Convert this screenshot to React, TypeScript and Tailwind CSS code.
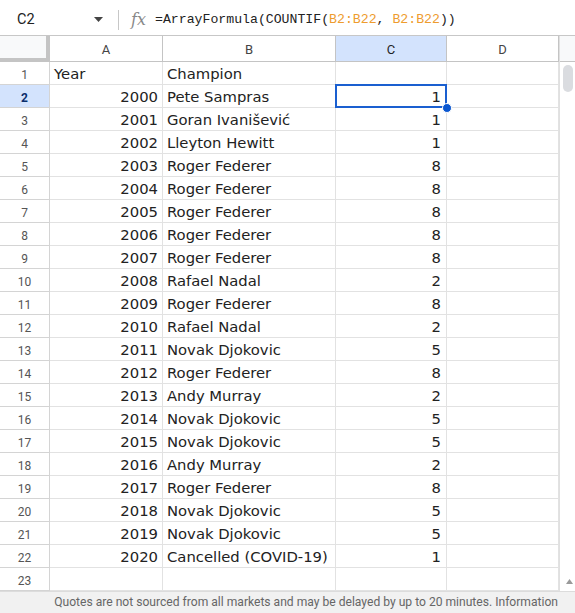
import React from "react";

const data: [number, string, number][] = [
  [2000, "Pete Sampras", 1],
  [2001, "Goran Ivanišević", 1],
  [2002, "Lleyton Hewitt", 1],
  [2003, "Roger Federer", 8],
  [2004, "Roger Federer", 8],
  [2005, "Roger Federer", 8],
  [2006, "Roger Federer", 8],
  [2007, "Roger Federer", 8],
  [2008, "Rafael Nadal", 2],
  [2009, "Roger Federer", 8],
  [2010, "Rafael Nadal", 2],
  [2011, "Novak Djokovic", 5],
  [2012, "Roger Federer", 8],
  [2013, "Andy Murray", 2],
  [2014, "Novak Djokovic", 5],
  [2015, "Novak Djokovic", 5],
  [2016, "Andy Murray", 2],
  [2017, "Roger Federer", 8],
  [2018, "Novak Djokovic", 5],
  [2019, "Novak Djokovic", 5],
  [2020, "Cancelled (COVID-19)", 1],
];

const cellFont = "font-['DejaVu_Sans',sans-serif] text-[14.8px] text-[#222] pt-[3px]";

function RowHeader({ n, selected }: { n: number; selected?: boolean }) {
  return (
    <div
      className={`h-[23px] border-r border-b border-[#d4d4d4] flex items-center justify-center pt-[3px] font-['Roboto',sans-serif] text-[12px] ${
        selected ? "bg-[#d3e3fd] text-[#0b2e6b] font-bold" : "bg-white text-[#555]"
      }`}
    >
      {n}
    </div>
  );
}

export default function App() {
  const rows: ([number, string, number] | null)[] = [null, ...data, null];
  return (
    <div className="w-[575px] h-[613px] bg-white flex flex-col overflow-hidden">
      {/* Formula bar */}
      <div className="h-[36px] shrink-0 border-b border-[#c7c7c7] flex items-center pt-[5px]">
        <div className="w-[118px] flex items-center pl-[17px] pr-[14px] justify-between">
          <span className="font-['Roboto',sans-serif] text-[14.5px] text-[#222]">C2</span>
          <svg width="9" height="6" viewBox="0 0 9 6" className="mr-[1px]">
            <path d="M0 0 L9 0 L4.5 5 Z" fill="#444" />
          </svg>
        </div>
        <div className="w-px h-[20px] bg-[#c7c7c7]" />
        <span className="ml-[12px] w-[24px] font-['DejaVu_Serif',serif] italic text-[16px] text-[#888] leading-none">
          fx
        </span>
        <span className="font-['Liberation_Mono',monospace] text-[13.2px] text-[#222] whitespace-nowrap">
          =ArrayFormula(COUNTIF(<span className="text-[#ee9c2e]">B2:B22</span>,{" "}
          <span className="text-[#ee9c2e]">B2:B22</span>))
        </span>
      </div>

      {/* Sheet area */}
      <div className="flex flex-1 min-h-0">
        <div className="w-[559px] shrink-0 flex flex-col">
          {/* Column header */}
          <div className="grid grid-cols-[50px_113px_173px_111px_112px] h-[26px] shrink-0">
            <div className="bg-[#f8f9fa] border-r-[4px] border-b-[4px] border-[#c4c4c4]" />
            {["A", "B", "C", "D"].map((c) => (
              <div
                key={c}
                className={`border-r border-b border-[#c4c4c4] flex items-center justify-center pt-[3px] font-['Roboto',sans-serif] text-[13px] ${
                  c === "C" ? "bg-[#d3e3fd] text-[#1f1f1f]" : "bg-white text-[#444]"
                }`}
              >
                {c}
              </div>
            ))}
          </div>
          {/* Rows */}
          {rows.map((r, i) => {
            const n = i + 1;
            const isHeader = n === 1;
            return (
              <div key={n} className="grid grid-cols-[50px_113px_173px_111px_112px]">
                <RowHeader n={n} selected={n === 2} />
                <div
                  className={`h-[23px] border-r border-b border-[#e2e2e2] flex items-center px-[4px] ${cellFont} ${
                    isHeader ? "justify-start" : "justify-end"
                  }`}
                >
                  {isHeader ? "Year" : r ? r[0] : ""}
                </div>
                <div className={`h-[23px] border-r border-b border-[#e2e2e2] flex items-center px-[4px] whitespace-nowrap ${cellFont}`}>
                  {isHeader ? "Champion" : r ? r[1] : ""}
                </div>
                <div
                  className={`relative h-[23px] border-r border-b border-[#e2e2e2] flex items-center justify-end px-[5px] ${cellFont}`}
                >
                  {r && !isHeader ? r[2] : ""}
                  {n === 2 && (
                    <>
                      <div className="absolute -left-px -top-px -right-px -bottom-px border-2 border-[#1a5fd0] pointer-events-none" />
                      <div className="absolute right-[-6px] bottom-[-6px] w-[10px] h-[10px] rounded-full bg-[#0b57d0] border border-white z-10" />
                    </>
                  )}
                </div>
                <div className="h-[23px] border-r border-b border-[#e2e2e2]" />
              </div>
            );
          })}
        </div>
        {/* Scrollbar */}
        <div className="flex-1 flex flex-col border-l border-[#e0e0e0]">
          <div className="h-[26px] bg-[#f8f9fa] border-b border-[#c4c4c4] shrink-0" />
          <div className="flex-1 relative bg-white">
            <div className="absolute left-[3px] top-[3px] w-[10px] h-[27px] rounded-full bg-[#dadce0]" />
            <svg width="7" height="5" viewBox="0 0 7 5" className="absolute left-[6px] bottom-[7px]">
              <path d="M0 5 L3.5 0 L7 5 Z" fill="#9a9a9a" />
            </svg>
          </div>
        </div>
      </div>

      {/* Status bar */}
      <div className="h-[22px] shrink-0 bg-[#f1f1f1] border-t border-[#dcdcdc] flex items-center justify-end pr-[17px] relative">
        <span className="font-['Roboto',sans-serif] text-[12.1px] text-[#666] whitespace-nowrap">
          Quotes are not sourced from all markets and may be delayed by up to 20 minutes. Information
        </span>
      </div>
    </div>
  );
}
